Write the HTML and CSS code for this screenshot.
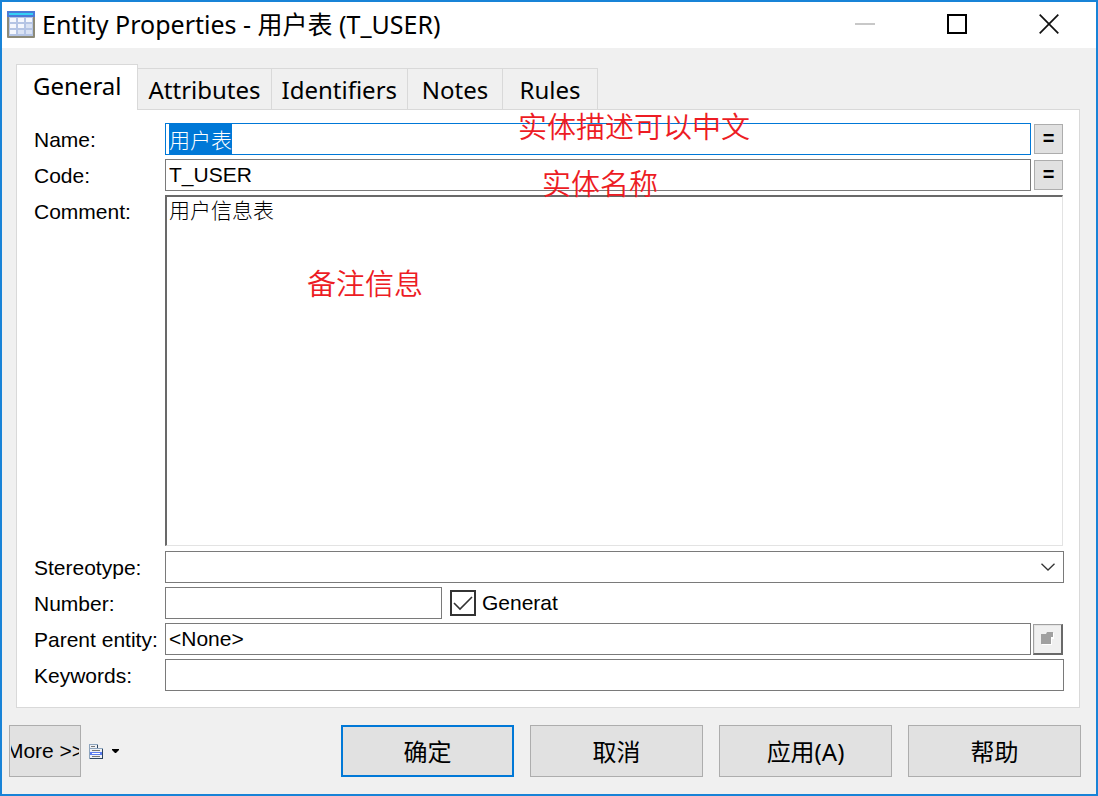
FILE: index.html
```
<!DOCTYPE html>
<html lang="zh-CN">
<head>
    <meta charset="UTF-8">
    <meta name="viewport" content="width=device-width, initial-scale=1.0">
    <title>Entity Properties - 用户表 (T_USER)</title>
    <link rel="stylesheet" href="styles.css">
</head>
<body>
    <div class="window">
        <header class="title-bar">
            <svg class="app-icon" width="28" height="27" viewBox="0 0 28 27">
                <rect x="0" y="0" width="28" height="27" rx="1" fill="#8c8a78"/>
                <rect x="2" y="6" width="24" height="19" fill="#b4c4e4"/>
                <rect x="0" y="0" width="28" height="6" fill="#4a7ad8"/>
                <rect x="2" y="2" width="24" height="2" fill="#35d0f4"/>
                <g fill="#f4f7fd">
                    <rect x="3" y="7" width="6" height="4"/><rect x="11" y="7" width="6" height="4"/><rect x="19" y="7" width="6" height="4"/>
                    <rect x="3" y="13" width="6" height="4"/><rect x="11" y="13" width="6" height="4"/>
                    <rect x="3" y="19" width="6" height="4"/>
                </g>
                <g fill="#d9e2f3">
                    <rect x="19" y="13" width="6" height="4"/><rect x="11" y="19" width="6" height="4"/><rect x="19" y="19" width="6" height="4"/>
                </g>
            </svg>
            <h1>Entity Properties - 用户表 (T_USER)</h1>
            <div class="window-buttons">
                <button type="button" aria-label="最小化" disabled>
                    <svg width="20" height="20" viewBox="0 0 20 20"><path d="M0 10h20" stroke="#c8c8c8" stroke-width="2"/></svg>
                </button>
                <button type="button" aria-label="最大化">
                    <svg width="20" height="20" viewBox="0 0 20 20"><rect x="1" y="1" width="18" height="18" fill="none" stroke="#000" stroke-width="2"/></svg>
                </button>
                <button type="button" aria-label="关闭">
                    <svg width="20" height="20" viewBox="0 0 20 20"><path d="M0.7 0.7L19.3 19.3M19.3 0.7L0.7 19.3" stroke="#111" stroke-width="1.7"/></svg>
                </button>
            </div>
        </header>

        <nav class="tabs" role="tablist">
            <button type="button" class="tab active" role="tab" aria-selected="true">General</button>
            <button type="button" class="tab" role="tab">Attributes</button>
            <button type="button" class="tab" role="tab">Identifiers</button>
            <button type="button" class="tab" role="tab">Notes</button>
            <button type="button" class="tab" role="tab">Rules</button>
        </nav>

        <form class="panel" id="entityForm">
            <label for="name">Name:</label>
            <div class="field">
                <input type="text" id="name" value="用户表" autofocus>
                <button type="button" class="small-btn" aria-label="同步名称">=</button>
                <span class="note note-name">实体描述可以中文</span>
            </div>

            <label for="code">Code:</label>
            <div class="field">
                <input type="text" id="code" value="T_USER">
                <button type="button" class="small-btn" aria-label="同步代码">=</button>
                <span class="note note-code">实体名称</span>
            </div>

            <label for="comment">Comment:</label>
            <div class="field field-comment">
                <textarea id="comment">用户信息表</textarea>
                <span class="note note-comment">备注信息</span>
            </div>

            <label for="stereotype">Stereotype:</label>
            <div class="field">
                <select id="stereotype">
                    <option value=""></option>
                </select>
                <svg class="arrow" width="14" height="8" viewBox="0 0 14 8"><path d="M0.5 0.7L7 7L13.5 0.7" fill="none" stroke="#333" stroke-width="1.3"/></svg>
            </div>

            <label for="number">Number:</label>
            <div class="field field-number">
                <input type="text" id="number">
                <input type="checkbox" id="generate" checked>
                <label for="generate" class="check-label">Generat</label>
            </div>

            <label for="parent">Parent entity:</label>
            <div class="field">
                <input type="text" id="parent" value="&lt;None&gt;" readonly>
                <button type="button" class="small-btn raised" aria-label="属性" disabled>
                    <svg width="13" height="13" viewBox="0 0 13 13">
                        <path d="M1 3h5l1-2h6v6h-2v6H1z" fill="#fff"/>
                        <path d="M0 2h5l1-2h6v5h-2v7H0z" fill="#a0a0a0"/>
                    </svg>
                </button>
            </div>

            <label for="keywords">Keywords:</label>
            <div class="field">
                <input type="text" id="keywords">
            </div>
        </form>

        <footer class="actions">
            <button type="button" class="more"><span>More &gt;&gt;</span></button>
            <button type="button" class="menu" aria-label="菜单">
                <svg width="14" height="15" viewBox="0 0 14 15">
                    <path d="M0 0h9v4h5v11H0z" fill="#8ea5bd"/>
                    <path d="M1 1h7v3H1zM1 5h12v9H1z" fill="#eef1f6"/>
                    <path d="M8 1h1v3H8zM13 5h1v10H1v-1h12z" fill="#2c4460"/>
                    <path d="M2 2h4v1H2zM3 6h8v1H3zM3 12h8v1H3z" fill="#777"/>
                    <path d="M1 8h12v3H1z" fill="#5b7cf0"/>
                    <path d="M3 9h8v1H3z" fill="#fff"/>
                </svg>
                <svg width="7" height="4" viewBox="0 0 7 4"><path d="M0 0h7v1L4 4H3L0 1z" fill="#000"/></svg>
            </button>
            <div class="dialog-buttons">
                <button type="submit" form="entityForm" class="default">确定</button>
                <button type="button">取消</button>
                <button type="button">应用(A)</button>
                <button type="button">帮助</button>
            </div>
        </footer>
    </div>

    <script>
        // 打开时选中名称
        const nameInput = document.getElementById('name');
        nameInput.focus();
        nameInput.select();
    </script>
</body>
</html>
```
FILE: styles.css
```
* {
    box-sizing: border-box;
}
body {
    margin: 0;
    font-family: "Liberation Sans", "Noto Sans CJK SC", sans-serif;
    font-size: 21px;
    color: #000;
}
button, input, select, textarea {
    font: inherit;
    color: inherit;
    margin: 0;
    border-radius: 0;
}
button {
    padding: 0;
    background: #e1e1e1;
    border: 1px solid #adadad;
}
svg {
    display: block;
    flex: none;
}
.window {
    display: flex;
    flex-direction: column;
    min-height: 100vh;
    background: #f0f0f0;
    border: 2px solid #1883d7;
}

/* 标题栏 */
.title-bar {
    display: flex;
    align-items: center;
    height: 46px;
    padding: 0 1px 2px 5px;
    background: #fff;
}
.title-bar h1 {
    margin: 0 0 0 7px;
    font-family: "Noto Sans", "Noto Sans CJK SC", sans-serif;
    font-size: 25px;
    font-weight: normal;
    line-height: 32px;
}
.window-buttons {
    display: flex;
    align-self: stretch;
    margin-left: auto;
}
.window-buttons button {
    display: flex;
    align-items: center;
    justify-content: center;
    width: 92px;
    background: none;
    border: none;
}

/* 选项卡 */
.tabs {
    display: flex;
    align-items: flex-end;
    padding: 16px 14px 0;
}
.tab {
    min-width: 95px;
    height: 41px;
    padding: 2px 10px 0;
    font-family: "Noto Sans", sans-serif;
    font-size: 24px;
    line-height: 32px;
    background: #f0f0f0;
    border: 1px solid #d9d9d9;
    border-width: 1px 1px 0 0;
}
.tab.active {
    height: 46px;
    margin-bottom: -1px;
    padding: 0 16px 3px;
    background: #fff;
    border-left-width: 1px;
    z-index: 1;
}

/* 表单 */
.panel {
    flex: 1;
    display: grid;
    grid-template-columns: 131px 1fr;
    grid-template-rows: 32px 32px 1fr 32px 32px 32px 32px;
    row-gap: 4px;
    margin: 0 16px 0 14px;
    padding: 13px 15px 16px 17px;
    background: #fff;
    border: 1px solid #d9d9d9;
}
.panel label {
    line-height: 34px;
    white-space: nowrap;
}
.field {
    position: relative;
    display: flex;
    align-items: center;
    min-width: 0;
}
.field input[type="text"], .field select {
    flex: 1;
    min-width: 0;
    height: 32px;
    padding: 2px 3px 3px;
    line-height: 25px;
    background: #fff;
    border: 1px solid #7a7a7a;
    outline: none;
}
.field input[type="text"]:focus {
    border-color: #0078d7;
}
.field input::selection {
    background: #0078d7;
    color: #fff;
}
.field-number input[type="text"] {
    flex: 0 0 277px;
}
.field select {
    appearance: none;
}
.arrow {
    position: absolute;
    right: 9px;
    pointer-events: none;
}
.field-comment {
    align-items: stretch;
    padding: 0 1px 1px 0;
}
textarea {
    flex: 1;
    padding: 1px 2px;
    line-height: 25px;
    border: 1px solid #e3e3e3;
    border-top: 2px solid #696969;
    border-left: 2px solid #696969;
    outline: none;
    resize: none;
}
#name, #comment {
    font-weight: 300;
}
.small-btn {
    display: flex;
    align-items: center;
    justify-content: center;
    width: 29px;
    height: 30px;
    margin: 0 1px 0 3px;
    padding-bottom: 2px;
    font-size: 20px;
    font-weight: bold;
}
.small-btn.raised {
    width: 30px;
    height: 31px;
    margin-left: 2px;
    padding: 0;
    background: #f0f0f0;
    border: 1px solid #a0a0a0;
    border-right: 2px solid #696969;
    border-bottom: 2px solid #696969;
    box-shadow: inset 1px 1px #e3e3e3;
}
input[type="checkbox"] {
    appearance: none;
    width: 26px;
    height: 26px;
    margin: 0 6px 0 8px;
    border: 2px solid #333;
    background: #fff url("data:image/svg+xml,%3Csvg xmlns='http://www.w3.org/2000/svg' viewBox='0 0 22 22'%3E%3Cpath d='M2 11l6 6L20 5' fill='none' stroke='%23333' stroke-width='1.6'/%3E%3C/svg%3E");
}
.panel .check-label {
    line-height: 32px;
}

/* 红色批注 */
.note {
    position: absolute;
    font-family: "Noto Sans CJK SC", sans-serif;
    font-size: 29px;
    font-weight: 350;
    line-height: 32px;
    color: #ed1c24;
    white-space: nowrap;
    pointer-events: none;
    z-index: 2;
}
.note-name {
    left: 353px;
    top: -14px;
}
.note-code {
    left: 377px;
    top: 7px;
}
.note-comment {
    left: 142px;
    top: 71px;
}

/* 底部按钮 */
.actions {
    display: flex;
    align-items: center;
    padding: 17px 15px 17px 7px;
}
.more {
    display: flex;
    align-items: center;
    justify-content: center;
    width: 72px;
    height: 52px;
    padding: 0 1px;
}
.more span {
    display: flex;
    justify-content: center;
    width: 100%;
    overflow: hidden;
    white-space: nowrap;
}
.menu {
    display: flex;
    align-items: center;
    gap: 9px;
    margin-left: 8px;
    background: none;
    border: none;
}
.dialog-buttons {
    display: flex;
    gap: 16px;
    margin-left: auto;
}
.dialog-buttons button {
    width: 173px;
    height: 52px;
    padding-bottom: 2px;
    font-family: "Noto Sans", "Noto Sans CJK SC", sans-serif;
    font-size: 24px;
}
.dialog-buttons .default {
    border: 2px solid #0078d7;
}
```
